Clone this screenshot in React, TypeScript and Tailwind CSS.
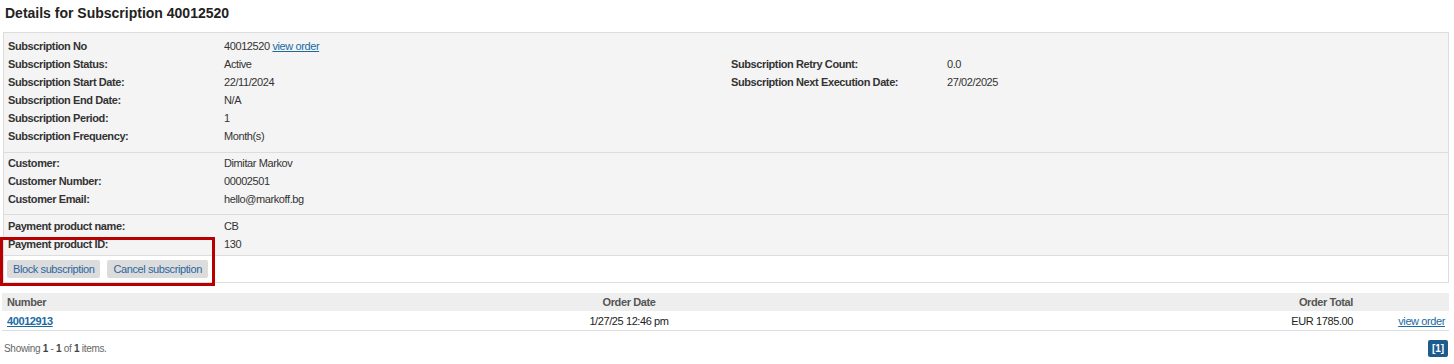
import React from 'react';

interface Row {
  label: string;
  value: React.ReactNode;
}

const txt = "text-[11px] tracking-[-0.4px] leading-[18px]";
const link = "text-[#1a6aa3] underline";

const DetailRows: React.FC<{ rows: Row[] }> = ({ rows }) => (
  <>
    {rows.map((r) => (
      <React.Fragment key={r.label}>
        <div className="font-bold text-[#333]">{r.label}</div>
        <div className="text-[#333]">{r.value}</div>
      </React.Fragment>
    ))}
  </>
);

const App: React.FC = () => {
  const customer: Row[] = [
    { label: "Customer:", value: "Dimitar Markov" },
    { label: "Customer Number:", value: "00002501" },
    { label: "Customer Email:", value: "hello@markoff.bg" },
  ];
  const payment: Row[] = [
    { label: "Payment product name:", value: "CB" },
    { label: "Payment product ID:", value: "130" },
  ];

  return (
    <div className="relative w-[1454px] min-h-[364px] bg-white font-['Liberation_Sans',Arial,sans-serif] text-[#333]">
      <h1 className="pl-[5px] pt-[4px] mb-[10px] text-[14px] font-bold leading-[18px] text-[#222]">
        Details for Subscription 40012520
      </h1>

      {/* subscription panel */}
      <div className={`ml-[3px] mr-[5px] border border-[#ddd] ${txt}`}>
        <div className="grid grid-cols-[216px_507px_216px_1fr] pl-[4px] pt-[4px] pb-[7px] bg-[#f4f4f4] border-b border-[#ddd]">
          <div className="font-bold">Subscription No</div>
          <div>
            40012520 <a className={link}>view order</a>
          </div>
          <div />
          <div />
          <div className="font-bold">Subscription Status:</div>
          <div>Active</div>
          <div className="font-bold">Subscription Retry Count:</div>
          <div>0.0</div>
          <div className="font-bold">Subscription Start Date:</div>
          <div>22/11/2024</div>
          <div className="font-bold">Subscription Next Execution Date:</div>
          <div>27/02/2025</div>
          <div className="font-bold">Subscription End Date:</div>
          <div className="col-span-3">N/A</div>
          <div className="font-bold">Subscription Period:</div>
          <div className="col-span-3">1</div>
          <div className="font-bold">Subscription Frequency:</div>
          <div className="col-span-3">Month(s)</div>
        </div>

        <div className="grid grid-cols-[216px_1fr] pl-[4px] pt-[1px] pb-[6px] bg-[#f4f4f4] border-b border-[#ddd]">
          <DetailRows rows={customer} />
        </div>

        <div className="grid grid-cols-[216px_1fr] pl-[4px] pt-[2px] pb-[2px] bg-[#f4f4f4] border-b border-[#ddd]">
          <DetailRows rows={payment} />
        </div>

        <div className="flex gap-[7px] pl-[3px] pt-[4px] pb-[4px] bg-white">
          <button className="h-[18px] px-[6px] rounded-[2px] bg-[#dcdcdc] text-[#2a67a0] leading-[18px]">
            Block subscription
          </button>
          <button className="h-[18px] px-[6px] rounded-[2px] bg-[#dcdcdc] text-[#2a67a0] leading-[18px]">
            Cancel subscription
          </button>
        </div>
      </div>

      {/* highlight box */}
      <div className="absolute left-0 top-[237px] w-[215px] h-[49px] border-[3px] border-[#b80000] pointer-events-none" />

      {/* orders table */}
      <div className={`mt-[10px] ml-[2px] mr-[5px] ${txt}`}>
        <div className="grid grid-cols-[418px_418px_1fr_94px] h-[18px] items-center bg-[#eee] font-bold text-[#555]">
          <div className="pl-[5px]">Number</div>
          <div className="text-center">Order Date</div>
          <div className="text-right pr-[2px]">Order Total</div>
          <div />
        </div>
        <div className="grid grid-cols-[418px_418px_1fr_94px] h-[20px] items-center border-b border-[#ddd] text-[#222]">
          <div className="pl-[5px]">
            <a className={`${link} font-bold`}>40012913</a>
          </div>
          <div className="text-center">1/27/25 12:46 pm</div>
          <div className="text-right pr-[2px]">EUR 1785.00</div>
          <div className="text-right pr-[4px]">
            <a className={link}>view order</a>
          </div>
        </div>
      </div>

      <div className="flex items-center justify-between mt-[9px] pl-[4px] pr-[6px]">
        <div className="text-[10px] tracking-[-0.3px] text-[#666]">
          Showing <b className="text-[#444]">1</b> - <b className="text-[#444]">1</b> of{" "}
          <b className="text-[#444]">1</b> items.
        </div>
        <div className="h-[17px] w-[20px] rounded-[2px] bg-[#1d5b8c] text-white text-[10px] font-bold leading-[17px] text-center">
          [1]
        </div>
      </div>
    </div>
  );
};

export default App;
